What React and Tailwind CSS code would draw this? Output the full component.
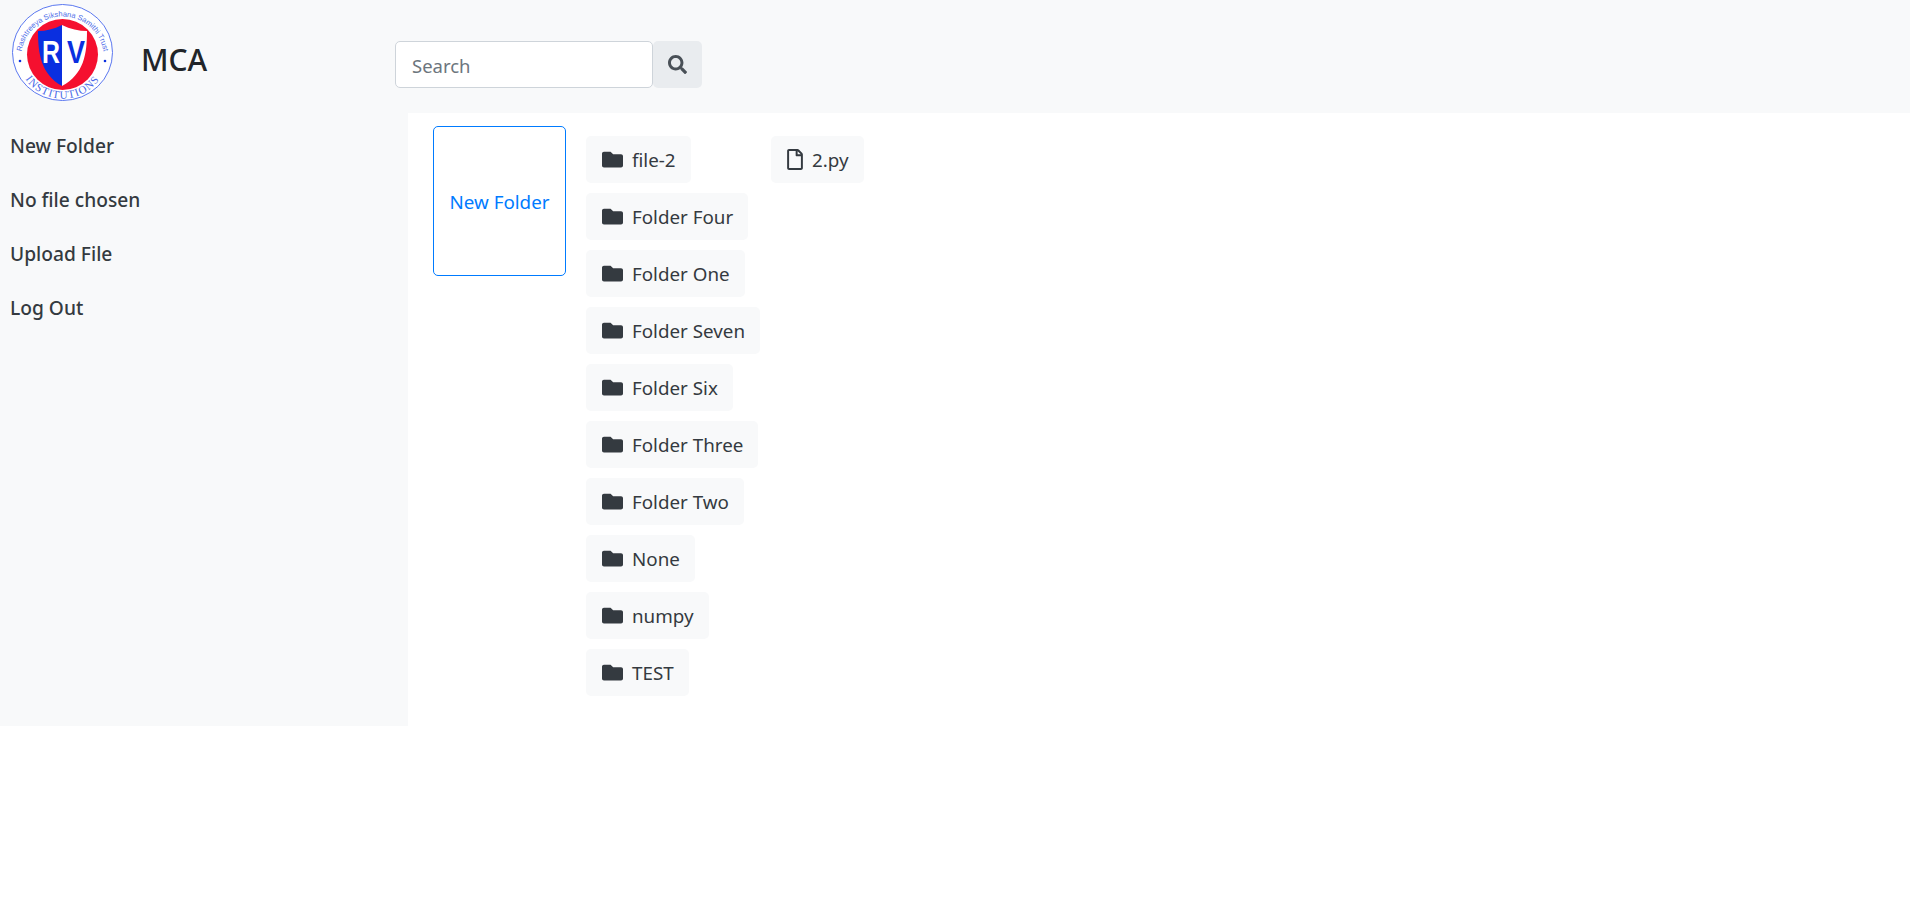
import React from 'react';
import { FaFolder, FaRegFile, FaSearch } from 'react-icons/fa';

const folders = ['file-2', 'Folder Four', 'Folder One', 'Folder Seven', 'Folder Six', 'Folder Three', 'Folder Two', 'None', 'numpy', 'TEST'];
const sideLinks = ['New Folder', 'No file chosen', 'Upload File', 'Log Out'];

const Logo = () => (
  <svg viewBox="0 0 104 100" className="w-[104px] h-[100px] shrink-0 self-start mt-[4px]">
    <defs>
      <path id="topArc" d="M 10 54 A 41.5 41.5 0 1 1 93 54" />
      <path id="bottomArc" d="M 6 49 A 45.5 45.5 0 0 0 97 49" />
    </defs>
    <ellipse cx="51.5" cy="48.5" rx="50" ry="48" fill="#fff" stroke="#5b78f0" strokeWidth="1" />
    <circle cx="51.5" cy="50.5" r="35.5" fill="#f5102f" />
    <path d="M51 21 C43 25 35 27 27 27 C27 50 30 70 51 82 Z" fill="#0a2fe0" />
    <path d="M51 21 C59 25 68 27 76 27 C76 50 73 70 51 82 Z" fill="#fff" />
    <text x="31" y="59" fill="#fff" fontSize="31" textLength="18" lengthAdjust="spacingAndGlyphs" fontWeight="bold" fontFamily="Liberation Sans, sans-serif">R</text>
    <text x="56" y="59" fill="#0a2fe0" fontSize="31" textLength="18" lengthAdjust="spacingAndGlyphs" fontWeight="bold" fontFamily="Liberation Sans, sans-serif">V</text>
    <text fill="#4a6ae8" fontSize="7.5" fontFamily="Liberation Sans, sans-serif">
      <textPath href="#topArc" startOffset="50%" textAnchor="middle">Rashtreeya Sikshana Samithi Trust</textPath>
    </text>
    <text fill="#4a6ae8" fontSize="11" fontFamily="Liberation Serif, serif" letterSpacing="1">
      <textPath href="#bottomArc" startOffset="50%" textAnchor="middle">INSTITUTIONS</textPath>
    </text>
    <circle cx="9" cy="57" r="1.3" fill="#0a2fe0" />
    <circle cx="94" cy="57" r="1.3" fill="#0a2fe0" />
  </svg>
);

const Item = ({ icon, name }) => (
  <div className="flex items-center h-[47px] pl-4 pr-[15px] rounded-[5px] bg-[#f8f9fa] text-[#343a40] w-fit whitespace-nowrap">
    {icon}
    <span className="pt-[1px]">{name}</span>
  </div>
);

const App = () => {
  return (
    <div className="w-full h-[900px] bg-white text-[18.8px] font-['Noto_Sans',sans-serif]">
      <header className="flex items-center h-[113px] bg-[#f8f9fa] pl-[11px]">
        <Logo />
        <h1 className="ml-[26px] mt-[7px] w-[254px] text-[30px] font-medium leading-none text-[#212529]">MCA</h1>
        <div className="flex mt-[16px]">
          <input
            placeholder="Search"
            className="w-[258px] h-[47px] px-4 pt-[2px] bg-white border border-[#ced4da] rounded-[5px] text-[18.5px] placeholder:text-[#6c757d] outline-none"
          />
          <button className="flex items-center justify-center w-[49px] h-[47px] bg-[#e9ecef] rounded-[5px] text-[#495057]">
            <FaSearch className="w-[19px] h-[19px]" />
          </button>
        </div>
      </header>
      <div className="flex h-[613px]">
        <aside className="w-[408px] bg-[#f8f9fa] pt-[6px] pl-[10px]">
          {sideLinks.map((link) => (
            <div key={link} className="h-[54px] flex items-center text-[19.2px] font-medium text-[#343a40]">{link}</div>
          ))}
        </aside>
        <main className="flex items-start pt-[13px] pl-[25px]">
          <button className="w-[133px] h-[150px] pt-[2px] border border-[#007bff] rounded-[5px] text-[#007bff] bg-white">New Folder</button>
          <div className="flex flex-col gap-[10px] mt-[10px] ml-[20px] w-[185px]">
            {folders.map((f) => (
              <Item key={f} name={f} icon={<FaFolder className="w-[21px] h-[21px] mr-[9px] text-[#343a40]" />} />
            ))}
          </div>
          <div className="mt-[10px]">
            <Item name="2.py" icon={<FaRegFile className="w-[16px] h-[21px] mr-[9px] text-[#343a40]" />} />
          </div>
        </main>
      </div>
    </div>
  );
};

export default App;
